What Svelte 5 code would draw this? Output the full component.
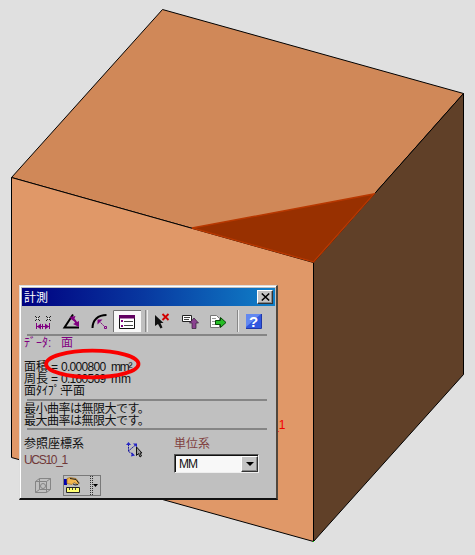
<script>
  const title = '計測';
  const unit = 'MM';
</script>

<main>
  <svg class="model" viewBox="0 0 475 555" aria-hidden="true">
    <g stroke="#000" stroke-width="1" stroke-linejoin="round">
      <path fill="#d08858" d="M162.5 9.5 463.5 93.5 313.5 262.5 11.5 177.5Z" />
      <path fill="#e09868" d="M11.5 177.5 313.5 262.5V541.5L11.5 457.5Z" />
      <path fill="#604028" d="M463.5 93.5V374.5L313.5 541.5V262.5Z" />
    </g>
    <path fill="#983000" stroke="#b83800" stroke-width="1.5" d="M192 228 374 194 313.5 262Z" />
    <rect x="313" y="541" width="1" height="1" fill="#0c0" />
    <text x="272" y="429" class="tag">_1</text>
  </svg>

  <section class="dialog">
    <header><span>{title}</span>
      <button class="close" aria-label="閉じる"><svg width="9" height="8" viewBox="0 0 9 8"><path d="M.8.5 8.2 7.5M8.2.5.8 7.5" stroke="#000" stroke-width="1.5" /></svg></button>
    </header>

    <svg class="tools" width="254" height="28" viewBox="22 306 254 28" fill="none">
      <g stroke="#222" stroke-width="1">
        <path d="M35 316l5 5m0-5-5 5M46 316l5 5m0-5-5 5" />
      </g>
      <path d="M37 318h1v1h-1zM48 318h1v1h-1z" fill="#eee" />
      <path d="M36.500 323v6M49.500 323v6M37 326.500h12M42.500 324v5" stroke="#800080" />
      <path d="M37 326.500l4-3v6zM49 326.500l-4-3v6z" fill="#800080" />
      <path d="M73 314.500 64.500 327.500H79" stroke="#000" stroke-width="2" />
      <path d="M71 318Q76 320 77 325" stroke="#800080" stroke-width="2" /><path d="M69.500 317l6-1-2 5zM79 321v6l-6-3z" fill="#800080" />
      <path d="M92.500 328C92.500 320 98 315 106.500 315" stroke="#000" stroke-width="2" />
      <path d="M99 321l5 5" stroke="#800080" stroke-dasharray="2 1" /><path d="M97.500 319.500h5l-5 5z" fill="#800080" /><path d="M104.500 326.500h2v2h-2z" stroke="#800080" />
      <path d="M113 310h28v22h-28z" fill="#f8f8f8" /><path d="M113.500 332V310.500H141" stroke="#707070" />
      <path d="M119.500 315.500h15v13h-15z" fill="#fff" stroke="#111" /><path d="M119 315h16v3.500h-16z" fill="#600060" />
      <path d="M124 321.500h9M124 325.500h9" stroke="#444" /><path d="M121 320h2v2h-2zM121 325h2v2h-2z" fill="#800080" />
      <path d="M145.500 310v22M237.500 310v22" stroke="#888" /><path d="M147.500 310v22M238.500 310v22" stroke="#eee" />
      <path d="M155 315v11l3-2 2.500 4.500 2-1-2-4.500h3z" fill="#111" />
      <path d="M162.500 314l6 6m0-6-6 6" stroke="#d00000" stroke-width="1.8" />
      <path d="M182.500 315.500h9v6h-9z" fill="#fff" stroke="#222" /><path d="M184 317.500h6M184 319.500h5" stroke="#444" />
      <path d="M194 318l4.500 5h-2.500v5.500h-4v-5.500h-2.500z" fill="#8b4291" stroke="#321c36" stroke-width=".7" />
      <path d="M210.500 315.500h6l3 3v9h-9z" fill="#fff" stroke="#777" /><path d="M212 318.500h4M212 321.500h4M212 324.500h5" stroke="#999" />
      <path d="M215.500 320.500h5v-3l5.500 5-5.500 5v-3h-5z" fill="#25bd25" stroke="#064706" />
      <path d="M246 314h15v15h-15z" fill="#3158df" /><path d="M246 314h15l-15 13z" fill="#6288f0" /><path d="M246 328.500h15.500V314" stroke="#2037a8" />
      <text x="249" y="327" class="help">?</text>
    </svg>
    <hr />
    <div class="row data"><span class="data-kana">ﾃﾞｰﾀ:</span><span class="kanji">面</span></div>
    <div class="values">
      <div class="row"><span class="kanji">面積</span><span class="eq">=</span><span class="num">0.000800</span><span class="mm">mm²</span></div>
      <div class="row"><span class="kanji">周長</span><span class="eq">=</span><span class="num">0.160569</span><span>mm</span></div>
      <div class="row"><span>面</span><span class="type">ﾀｲﾌﾟ:</span><span>平面</span></div>
    </div>
    <hr />
    <div class="curve">
      <div class="row">最小曲率は無限大です。</div>
      <div class="row">最大曲率は無限大です。</div>
    </div>
    <hr />
    <div class="bottom">
      <div class="coords">
        <div class="label">参照座標系</div>
        <div class="ucs">UCS10_1</div>
      </div>
      <svg class="axis" width="18" height="18" viewBox="125 440 18 18" fill="none">
        <path d="M128.500 444v7l7-6M128.500 451.500l5 3" stroke="#1616a0" stroke-dasharray="2 .7" /><path d="M126 445l2.500-3 2.500 3zM133 443.500h4v4zM132 452.500l3 3-4 1z" fill="#2525c5" />
        <path d="M136.500 447v8.500l2-2 1.500 3.500 1.500-1-1.500-3h2z" fill="#999" stroke="#111" />
      </svg>
      <div class="units">
        <div class="label unit-label">単位系</div>
        <div class="select"><span>{unit}</span><button aria-label="単位を選択"><i></i></button></div>
      </div>
    </div>
    <svg class="footer" width="82" height="24" viewBox="33 474 82 24" fill="none">
      <g stroke="#858585"><path d="M35.500 481.500h11v11h-11zM39.500 478.500h11v11h-11zM35.500 481.500l4-3M46.500 481.500l4-3M46.500 492.500l4-3M35.500 492.500l4-3" /><circle cx="43" cy="486" r="2.500" /></g>
      <path d="M63.500 475.500h37v20h-37zM90.500 476v19M92.500 476v19" stroke="#333" stroke-dasharray="1 1" />
      <path d="M64 479h3v6h-3z" fill="#0000b0" /><path d="M67 478.500l3-1 6 1 3 4-1 2-4-2-2 2-5-1z" fill="#f2b64e" stroke="#9c6c20" stroke-width=".7" /><path d="M70 478.500l6 1 3 4M73 484l2 1 3-.5" stroke="#222" />
      <path d="M66.500 487.500h13v5h-13z" fill="#ffff72" stroke="#222" /><path d="M69.500 488v2M72.500 488v2M75.500 488v2" stroke="#444" />
      <path d="M93 484h5l-2.500 3z" fill="#000" />
    </svg>
  </section>
  <svg class="callout" width="100" height="34" viewBox="42 347 100 34" aria-hidden="true"><ellipse cx="92.300" cy="364" rx="46.200" ry="13.300" fill="none" stroke="#fa0000" stroke-width="3.800" /></svg>
</main>

<style>
  :global(body) { margin: 0; }
  main { position: relative; width: 475px; height: 555px; overflow: hidden; background: #e0e0e0; font: 12px/12px "Liberation Sans", "Noto Sans CJK JP", sans-serif; color: #111; }
  svg { display: block; }
  .model { width: 475px; height: 555px; }
  .tag { font-size: 12px; fill: #f20000; }
  .dialog { position: absolute; left: 19px; top: 285px; width: 259px; height: 215px; box-sizing: border-box; padding: 1px; background: #c0c0c0; border: 1px solid #ddd; border-right: 2px solid #51473d; border-bottom: 2px solid #111; box-shadow: inset 1px 1px #fff; }
  header { height: 18px; box-sizing: border-box; display: flex; align-items: center; justify-content: space-between; margin: 1px 0 0 1px; padding: 0 2px; width: 253px; background: linear-gradient(90deg, #000080, #0838a0 48%, #1080c8); color: #fff; }
  header span { padding-top: 1px; }
  button { box-sizing: border-box; padding: 0; display: flex; align-items: center; justify-content: center; background: #c4c4c4; border: 1px solid; border-color: #fff #333 #333 #fff; box-shadow: inset -1px -1px #888; }
  .close { width: 16px; height: 14px; }
  .tools { margin-left: 1px; }
  .help { font: bold 15px "Liberation Sans", sans-serif; fill: #fff; }
  hr { width: 240px; height: 2px; margin: 0 0 0 6px; border: 0; background: #858585; }
  .row { height: 12px; line-height: 14px; display: flex; white-space: pre; margin-left: 3px; }
  .data { color: #800080; }
  .data-kana { width: 37px; }
  .values { height: 39px; margin-top: 12px; }
  .kanji { width: 27px; }
  .eq { width: 10px; }
  .num { width: 50px; letter-spacing: -.7px; }
  .mm { letter-spacing: -1.3px; }
  .type { width: 25px; letter-spacing: -.1px; }
  .curve { height: 27px; padding-top: 1px; box-sizing: border-box; }
  .curve .row { letter-spacing: -.5px; }
  .bottom { display: flex; margin-left: 3px; height: 44px; }
  .coords { width: 101px; padding-top: 7px; }
  .label { height: 12px; line-height: 14px; }
  .ucs { margin-top: 5px; color: #703838; letter-spacing: -1.3px; }
  .axis { margin-top: 10px; }
  .units { margin-left: 31px; padding-top: 7px; }
  .unit-label { color: #804040; }
  .select { width: 85px; height: 19px; margin-top: 5px; box-sizing: border-box; display: flex; justify-content: space-between; background: #f8f8f8; border: 1px solid; border-color: #555 #eee #eee #555; box-shadow: inset 1px 1px #111; }
  .select span { padding: 3px 0 0 4px; letter-spacing: -1px; }
  .select button { width: 17px; height: 16px; margin-top: 1px; }
  i { border: 4px solid transparent; border-top-color: #000; border-bottom: 0; }
  .footer { margin-left: 12px; }
  .callout { position: absolute; left: 42px; top: 347px; }
</style>
